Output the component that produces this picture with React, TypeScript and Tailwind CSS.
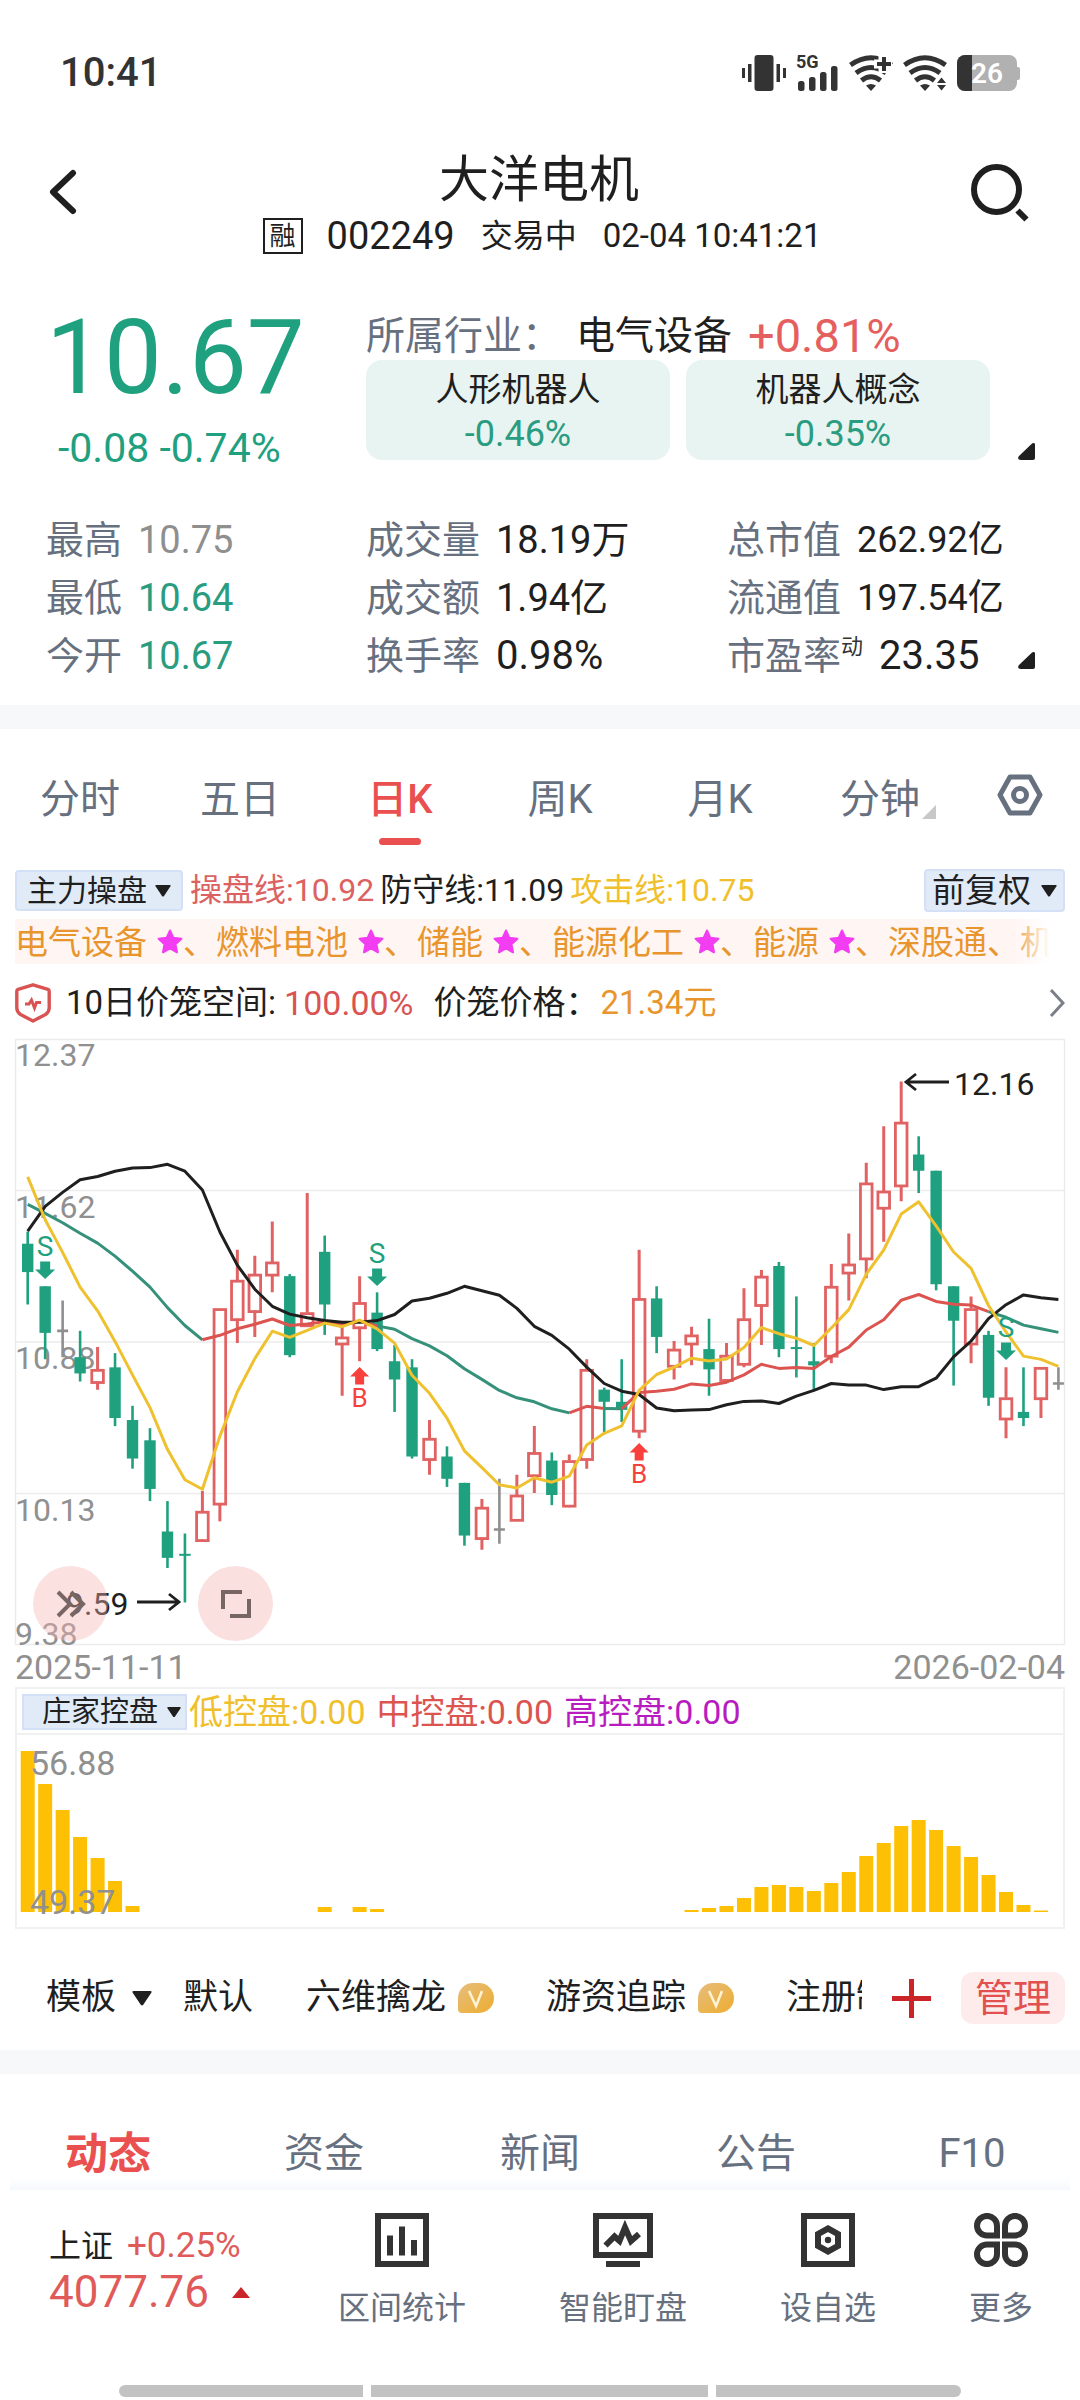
import type { ReactNode } from "react";

type Candle = [high: number, open: number, close: number, low: number];

const UP = "#e06262";
const DOWN = "#1fa07f";
const FLAT = "#8f8f8f";

const STEP = 17.47;
const FIRST_X = 12.7;
const TOP_PRICE = 12.37;
const BOTTOM_PRICE = 9.38;
const PLOT_HEIGHT = 606;

// [high, open, close, low]
const candles: Candle[] = [
  [11.42, 11.36, 11.22, 11.06],
  [11.15, 11.15, 10.92, 10.79],
  [11.08, 10.93, 10.93, 10.8],
  [10.93, 10.8, 10.72, 10.68],
  [10.85, 10.68, 10.74, 10.64],
  [10.82, 10.75, 10.5, 10.46],
  [10.56, 10.49, 10.3, 10.25],
  [10.45, 10.39, 10.15, 10.09],
  [10.09, 9.94, 9.81, 9.76],
  [9.93, 9.83, 9.82, 9.59],
  [10.14, 9.9, 10.04, 9.89],
  [11.04, 10.08, 11.04, 9.99],
  [11.33, 10.99, 11.18, 10.87],
  [11.3, 11.03, 11.21, 10.9],
  [11.47, 11.21, 11.27, 11.12],
  [11.21, 11.2, 10.81, 10.8],
  [11.61, 10.96, 11.02, 10.95],
  [11.4, 11.32, 11.06, 10.91],
  [10.96, 10.87, 10.9, 10.61],
  [11.2, 10.95, 11.07, 10.78],
  [11.12, 11.02, 10.84, 10.83],
  [10.86, 10.78, 10.69, 10.53],
  [10.79, 10.75, 10.31, 10.3],
  [10.49, 10.3, 10.4, 10.22],
  [10.36, 10.31, 10.2, 10.16],
  [10.18, 10.18, 9.92, 9.87],
  [10.1, 9.91, 10.06, 9.85],
  [10.2, 9.95, 9.95, 9.88],
  [10.22, 10.0, 10.12, 10.0],
  [10.46, 10.22, 10.33, 10.13],
  [10.33, 10.29, 10.12, 10.07],
  [10.32, 10.07, 10.29, 10.06],
  [10.79, 10.3, 10.74, 10.25],
  [10.65, 10.64, 10.58, 10.42],
  [10.79, 10.58, 10.54, 10.48],
  [11.33, 10.44, 11.09, 10.4],
  [11.15, 11.09, 10.9, 10.82],
  [10.88, 10.76, 10.84, 10.69],
  [10.95, 10.87, 10.91, 10.76],
  [10.99, 10.84, 10.74, 10.61],
  [10.87, 10.69, 10.81, 10.68],
  [11.14, 10.77, 10.99, 10.75],
  [11.23, 11.06, 11.2, 10.86],
  [11.27, 11.25, 10.84, 10.8],
  [11.1, 10.85, 10.84, 10.7],
  [10.87, 10.78, 10.76, 10.64],
  [11.26, 10.81, 11.15, 10.77],
  [11.41, 11.22, 11.26, 11.08],
  [11.76, 11.29, 11.66, 11.19],
  [11.94, 11.54, 11.62, 11.37],
  [12.16, 11.65, 11.96, 11.57],
  [11.89, 11.8, 11.72, 11.61],
  [11.72, 11.72, 11.16, 11.13],
  [11.15, 11.15, 10.98, 10.66],
  [11.1, 10.87, 11.04, 10.77],
  [10.93, 10.91, 10.6, 10.56],
  [10.75, 10.5, 10.6, 10.4],
  [10.75, 10.53, 10.5, 10.46],
  [10.75, 10.6, 10.75, 10.5],
  [10.75, 10.67, 10.67, 10.64],
];

// Indicator series, in raw plot units
const defence = [
  493, 432, 398, 367, 359, 346, 338, 337, 329, 346, 392, 495, 576, 635, 677, 696, 705, 712, 716, 716,
  712, 697, 664, 657, 645, 628, 639, 650, 682, 726, 748, 782, 826, 866, 885, 893, 926, 933, 931, 930,
  918, 910, 909, 915, 897, 883, 866, 870, 870, 881, 874, 874, 853, 801, 762, 707, 673, 649, 656, 660,
];
const attack = [
  360, 465, 545, 630, 688, 763, 845, 925, 1028, 1102, 1125, 995, 887, 805, 738, 753, 736, 718, 727, 711,
  732, 767, 846, 890, 951, 1031, 1072, 1114, 1122, 1097, 1108, 1093, 1017, 988, 970, 883, 844, 826, 804, 811,
  806, 778, 729, 744, 755, 773, 730, 685, 598, 539, 451, 421, 480, 544, 584, 675, 740, 799, 807, 824,
];
const control = [
  427, 449, 472, 498, 522, 554, 591, 630, 680, 724, 759, 748, 732, 721, 708, 724, 720, 715, 722, 714,
  725, 733, 756, 774, 798, 830, 856, 883, 901, 911, 928, 938, 922, 927, 928, 888, 885, 880, 867, 871,
  863, 845, 819, 829, 827, 829, 800, 777, 735, 710, 662, 648, 665, 672, 674, 690, 704, 723, 732, 741,
];
const controlSegments = [
  { from: 0, to: 10, color: "#35917a" },
  { from: 10, to: 20, color: "#dc5450" },
  { from: 20, to: 31, color: "#35917a" },
  { from: 31, to: 33, color: "#dc5450" },
  { from: 33, to: 34, color: "#35917a" },
  { from: 34, to: 55, color: "#dc5450" },
  { from: 55, to: 59, color: "#35917a" },
];

const sellMarks = [
  { index: 1, tip: 240 },
  { index: 20, tip: 247 },
  { index: 56, tip: 321 },
];
const buyMarks = [
  { index: 19, tip: 328 },
  { index: 35, tip: 404 },
];

const barHeights: Record<number, number> = {
  0: 161, 1: 128, 2: 102, 3: 75, 4: 54, 5: 31, 6: 6, 17: 5, 19: 5, 20: 3,
  38: 2, 39: 4, 40: 6, 41: 14, 42: 25, 43: 27, 44: 25, 45: 21, 46: 29, 47: 40, 48: 56,
  49: 69, 50: 86, 51: 92, 52: 82, 53: 66, 54: 55, 55: 37, 56: 20, 57: 7, 58: 1.5,
};

const xAt = (i: number) => FIRST_X + i * STEP;
const yAt = (price: number) =>
  ((TOP_PRICE - price) / (TOP_PRICE - BOTTOM_PRICE)) * PLOT_HEIGHT;
const linePoints = (values: number[], offset = 0) =>
  values.map((v, i) => `${xAt(i + offset).toFixed(1)},${(v / 2.45 - 9).toFixed(1)}`).join(" ");

function Caret({ className }: { className: string }) {
  return (
    <svg viewBox="0 0 16 12" className={className} aria-hidden="true">
      <path d="M1.5 0h13q2 0 .8 1.6L9 11q-1 1.2-2 0L.7 1.6Q-.5 0 1.5 0z" fill="#1f1f1f" />
    </svg>
  );
}

function CornerMark({ className }: { className: string }) {
  return (
    <svg viewBox="0 0 17 17" className={className} aria-hidden="true">
      <path d="M17 1v14a2 2 0 0 1-2 2H3C0 17-.6 15 1 13L13 1.500Q16-1 17 1z" fill="currentColor" />
    </svg>
  );
}

interface DropdownProps {
  label: string;
  value: string;
  className: string;
  caret: string;
}

function Dropdown({ label, value, className, caret }: DropdownProps) {
  return (
    <label className={`flex shrink-0 items-center ${className}`}>
      <select aria-label={label} className="appearance-none bg-transparent outline-none">
        <option>{value}</option>
      </select>
      <Caret className={caret} />
    </label>
  );
}

function WifiArcs() {
  return (
    <g fill="none" stroke="#333" strokeWidth="5">
      <path d="M1.500 10Q22-4.500 42.500 10" />
      <path d="M7 18Q22 7 37 18" />
      <path d="M12.500 25.500Q22 18 31.500 25.500" />
      <path d="M17 30.500Q22 27.500 27 30.500L22 36z" fill="#333" stroke="none" />
    </g>
  );
}

function StatusBar() {
  return (
    <div className="flex items-center justify-between py-[49px] pr-[60px] pl-[60px] leading-12">
      <span className="text-[40px] font-medium text-[#333]">10:41</span>
      <div className="flex items-center gap-[10px]">
        <svg width="44" height="36" viewBox="0 0 44 36" fill="#333" aria-label="振动">
          <rect x="12.500" width="19" height="36" rx="3" />
          <rect x="6" y="9" width="3.500" height="18" />
          <rect y="13" width="3" height="10" />
          <rect x="34.500" y="9" width="3.500" height="18" />
          <rect x="41" y="13" width="3" height="10" />
        </svg>
        <svg width="43" height="36" viewBox="0 0 43 36" fill="#333" className="overflow-visible" aria-label="5G">
          <text x="0" y="13" fontSize="18" fontWeight="700">5G</text>
          <rect x="2" y="26" width="6.500" height="10" rx="2.500" />
          <rect x="13" y="22" width="6.500" height="14" rx="2.500" />
          <rect x="24" y="17" width="6.500" height="19" rx="2.500" />
          <rect x="35" y="11" width="6.500" height="25" rx="2.500" />
        </svg>
        <svg width="44" height="36" viewBox="0 0 44 36" aria-label="WLAN+">
          <WifiArcs />
          <path d="M25 9h18M34 0v18" stroke="#fff" strokeWidth="9" />
          <path d="M28 9h14M35 2v14" stroke="#333" strokeWidth="4" />
        </svg>
        <svg width="44" height="36" viewBox="0 0 44 36" aria-label="WLAN">
          <WifiArcs />
          <path d="M38.500 20L45 28.500 38.500 37 32 28.500z" fill="#fff" />
          <path d="M38.500 22.500l4.500 5.500h-9zM34 30h9l-4.500 5.500z" fill="#333" />
        </svg>
        <svg width="63" height="36" viewBox="0 0 63 36" aria-label="电量 26">
          <rect width="60" height="36" rx="8" fill="#b1b1b1" />
          <rect x="58" y="12" width="5" height="13" rx="2" fill="#b1b1b1" />
          <path d="M8 0h7v36H8a8 8 0 0 1-8-8V8a8 8 0 0 1 8-8z" fill="#333" />
          <text x="14" y="28" fontSize="28" fontWeight="600" fill="#fff">26</text>
        </svg>
      </div>
    </div>
  );
}

function Header() {
  return (
    <header className="grid grid-cols-[1fr_auto_1fr] items-start pt-[6px] pr-[50px] pl-[48px]">
      <button aria-label="返回" className="mt-[17px] justify-self-start">
        <svg width="30" height="46" viewBox="0 0 30 46" fill="none" aria-hidden="true">
          <path d="M25 4L5 23l20 19" stroke="#1f1f1f" strokeWidth="6" strokeLinecap="round" strokeLinejoin="round" />
        </svg>
      </button>
      <div className="text-center text-[#1f1f1f]">
        <h1 className="text-[50px] leading-14">大洋电机</h1>
        <p className="mt-2 ml-[6px] flex items-center leading-10">
          <span className="border-2 border-[#1f1f1f] px-[5px] text-[26px] leading-8">融</span>
          <span className="ml-[24px] text-[38px]">002249</span>
          <span className="ml-[26px] text-[32px]">交易中</span>
          <span className="ml-[26px] text-[33px]">02-04 10:41:21</span>
        </p>
      </div>
      <button aria-label="搜索" className="mt-[11px] justify-self-end">
        <svg width="60" height="60" viewBox="0 0 60 60" fill="none" stroke="#1f1f1f" strokeWidth="6" aria-hidden="true">
          <circle cx="26.500" cy="26.500" r="22.500" />
          <path d="M47.500 47.500l9 9" />
        </svg>
      </button>
    </header>
  );
}

function Concept({ name, change }: { name: string; change: string }) {
  return (
    <a href="#concept" className="flex-1 rounded-2xl bg-[#e8f4f2] pt-2 pb-1 text-center">
      <span className="block text-[33px] leading-11 text-[#1f1f1f]">{name}</span>
      <span className="block text-4xl leading-11 text-[#2a9c80]">{change}</span>
    </a>
  );
}

interface StatProps {
  name: string;
  value: string;
  className: string;
  sup?: string;
  children?: ReactNode;
}

function Stat({ name, value, className, sup, children }: StatProps) {
  return (
    <div className="flex">
      <dt className="flex text-[38px] text-[#67707f]">
        {name}
        {sup && <span className="-mt-[9px] text-[22px] text-[#333]">{sup}</span>}
      </dt>
      <dd className={`ml-4 flex flex-1 ${className}`}>
        {value}
        {children}
      </dd>
    </div>
  );
}

function Quote() {
  return (
    <section className="pt-[50px] pr-[45px] pb-[20px] pl-[46px]">
      <div className="grid grid-cols-[320fr_669fr]">
        <div className="text-[#1fa07f]">
          <p className="text-[103px] leading-[104px]">10.67</p>
          <p className="mt-[18px] pl-3 text-[41px] leading-10">-0.08 -0.74%</p>
        </div>
        <div className="pt-[6px]">
          <p className="flex items-center text-[39px] leading-12">
            <span className="text-[#67707f]">所属行业：</span>
            <span className="ml-[15px] text-[#1f1f1f]">电气设备</span>
            <span className="ml-[16px] text-[47px] text-[#e65f5f]">+0.81%</span>
          </p>
          <div className="flex items-end gap-4">
            <Concept name="人形机器人" change="-0.46%" />
            <Concept name="机器人概念" change="-0.35%" />
            <CornerMark className="ml-[12px] w-[17px] text-[#1f1f1f]" />
          </div>
        </div>
      </div>
      <dl className="mt-[43px] grid grid-cols-[320fr_361fr_308fr] leading-[58px]">
        <Stat name="最高" value="10.75" className="text-[38px] text-[#8f8f8f]" />
        <Stat name="成交量" value="18.19万" className="text-[38px] text-[#1f1f1f]" />
        <Stat name="总市值" value="262.92亿" className="text-[36px] text-[#1f1f1f]" />
        <Stat name="最低" value="10.64" className="text-[38px] text-[#2a9c80]" />
        <Stat name="成交额" value="1.94亿" className="text-[38px] text-[#1f1f1f]" />
        <Stat name="流通值" value="197.54亿" className="text-[36px] text-[#1f1f1f]" />
        <Stat name="今开" value="10.67" className="text-[38px] text-[#2a9c80]" />
        <Stat name="换手率" value="0.98%" className="text-[40px] text-[#1f1f1f]" />
        <Stat name="市盈率" sup="动" value="23.35" className="items-center text-[40px] text-[#1f1f1f]">
          <CornerMark className="mt-2 ml-auto w-[17px]" />
        </Stat>
      </dl>
    </section>
  );
}

function PeriodTabs() {
  const periods = ["分时", "五日", "日K", "周K", "月K", "分钟"];
  return (
    <nav className="grid grid-cols-[repeat(6,4fr)_3fr] items-start pt-[43px] text-[40px] leading-14 text-[#67707f]">
      {periods.map((p) => (
        <button key={p} className={p === "日K" ? "font-medium text-[#e9504f]" : ""}>
          <span className="relative">
            {p}
            {p === "分钟" && (
              <svg viewBox="0 0 14 14" className="absolute right-[-16px] bottom-1 w-[14px]" aria-hidden="true">
                <path d="M14 0v14H0z" fill="#c8c8c8" />
              </svg>
            )}
          </span>
          <span
            className={
              p === "日K"
                ? "mx-auto mt-[10px] block h-[7px] w-[42px] rounded-full bg-[#e9504f]"
                : "mt-[10px] block h-[7px]"
            }
          />
        </button>
      ))}
      <button aria-label="图表设置" className="mt-[2px] justify-self-center">
        <svg width="46" height="42" viewBox="0 0 46 42" fill="none" stroke="#67707f" strokeWidth="5" aria-hidden="true">
          <path d="M13 3h20l10 18-10 18H13L3 21z" strokeLinejoin="round" />
          <circle cx="23" cy="21" r="6.500" />
        </svg>
      </button>
    </nav>
  );
}

function Star() {
  return (
    <svg viewBox="0 0 26 26" className="ml-[10px] inline-block w-[26px] align-[-1px]" aria-hidden="true">
      <path
        d="M13 1.500l3.400 7.300 8 1-5.900 5.500 1.500 8L13 19.400l-7 3.900 1.500-8L1.600 9.800l8-1z"
        fill="#f23df2"
        stroke="#f23df2"
        strokeWidth="2"
        strokeLinejoin="round"
      />
    </svg>
  );
}

function IndicatorBar() {
  const concepts = ["电气设备", "燃料电池", "储能", "能源化工", "能源"];
  return (
    <div className="mt-6 px-[15px] text-[33px] text-[#1f1f1f]">
      <div className="flex items-center leading-[37px]">
        <Dropdown
          label="主图指标"
          value="主力操盘"
          className="rounded border-2 border-[#d3e0f6] bg-[#e1ebf8] px-[10px] text-[30px]"
          caret="ml-2 w-[16px]"
        />
        <span className="ml-[7px] text-[32px] text-[#dc6262]">操盘线:10.92</span>
        <span className="ml-[6px] text-[32px]">防守线:11.09</span>
        <span className="ml-[6px] text-[32px] text-[#f0c02c]">攻击线:10.75</span>
        <Dropdown
          label="复权方式"
          value="前复权"
          className="ml-auto rounded border-2 border-[#d3e0f6] bg-[#e1ebf8] px-[6px] py-[1px]"
          caret="ml-[10px] w-[16px]"
        />
      </div>
      <div className="relative mt-[7px] mr-[15px] overflow-hidden bg-[#fff5f3] pt-[2px] leading-[43px] whitespace-nowrap text-[#e8952d]">
        {concepts.map((c) => (
          <span key={c}>
            <a href="#concept">{c}</a>
            <Star />、
          </span>
        ))}
        <a href="#concept">深股通</a>、<a href="#concept">机</a>
        <span className="absolute inset-y-0 right-0 w-10 bg-linear-to-r from-white/0 to-white" />
      </div>
      <div className="mt-[17px] flex items-center leading-11">
        <svg width="36" height="40" viewBox="0 0 36 40" fill="none" stroke="#d95353" aria-hidden="true">
          <path d="M18 1.800l15 4.500q1.200.5 1.200 2V25q0 4-3.700 6.500L18 38 5.500 31.500Q1.800 29 1.800 25V8.300q0-1.500 1.200-2z" strokeWidth="3.400" strokeLinejoin="round" />
          <path d="M10 21h4l2.500-4 3 8 2-5.500H26" strokeWidth="3" />
        </svg>
        <span className="ml-[15px]">10日价笼空间:</span>
        <span className="ml-2 text-[34px] text-[#d95353]">100.00%</span>
        <span className="ml-[20px]">价笼价格：</span>
        <span className="ml-[2px] text-[#e8952d]">21.34元</span>
        <button aria-label="价笼详情" className="ml-auto">
          <svg width="16" height="28" viewBox="0 0 16 28" fill="none" aria-hidden="true">
            <path d="M2 1l12 13L2 27" stroke="#7a7f88" strokeWidth="3" />
          </svg>
        </button>
      </div>
    </div>
  );
}

function CandleStick({ candle, index }: { candle: Candle; index: number }) {
  const [high, open, close, low] = candle;
  const x = xAt(index);
  const top = yAt(Math.max(open, close));
  const bottom = yAt(Math.min(open, close));
  if (open === close) {
    return (
      <path
        d={`M${x} ${yAt(high)}V${yAt(low)}M${x - 5.5} ${top}H${x + 5.5}`}
        stroke={FLAT}
        strokeWidth="2.600"
      />
    );
  }
  if (close > open) {
    return (
      <g stroke={UP} fill="none">
        <path d={`M${x} ${yAt(high)}V${top}M${x} ${bottom}V${yAt(low)}`} strokeWidth="3" />
        <rect x={x - 5.8} y={top + 1} width="11.600" height={Math.max(bottom - top, 4)} strokeWidth="2.800" />
      </g>
    );
  }
  return (
    <g fill={DOWN}>
      <path d={`M${x} ${yAt(high)}V${yAt(low)}`} stroke={DOWN} strokeWidth="2.600" />
      <rect x={x - 5.7} y={top} width="11.400" height={bottom - top} />
    </g>
  );
}

function PriceChart() {
  return (
    <div className="relative mx-[15px] mt-[14px]">
      <svg viewBox="0 0 1050 606" className="block w-full overflow-visible text-[32px]" role="img" aria-label="日K线图">
        <rect x="0.500" y="0.500" width="1049" height="605" fill="none" stroke="#ececec" strokeWidth="1.500" />
        <path d="M0 151.500H1050M0 303H1050M0 454.500H1050" stroke="#ececec" strokeWidth="1.500" />
        <g fill="#909090">
          <text x="0" y="27">12.37</text>
          <text x="0" y="179">11.62</text>
          <text x="0" y="330">10.88</text>
          <text x="0" y="482">10.13</text>
          <text x="0" y="606">9.38</text>
        </g>
        {candles.map((c, i) => (
          <CandleStick key={i} candle={c} index={i} />
        ))}
        <g fill="none" strokeWidth="3" strokeLinejoin="round">
          {controlSegments.map((s) => (
            <polyline
              key={s.from}
              points={linePoints(control.slice(s.from, s.to + 1), s.from)}
              stroke={s.color}
            />
          ))}
          <polyline points={linePoints(defence)} stroke="#1f1f1f" />
          <polyline points={linePoints(attack)} stroke="#efc12f" />
        </g>
        <g fill={DOWN} textAnchor="middle" fontSize="28">
          {sellMarks.map(({ index, tip }) => (
            <g key={index}>
              <path d={`M${xAt(index)} ${tip}l-10-9.500h5v-8h10v8h5z`} />
              <text x={xAt(index)} y={tip - 23}>S</text>
            </g>
          ))}
        </g>
        <g fill="#f8403d" textAnchor="middle" fontSize="26">
          {buyMarks.map(({ index, tip }) => (
            <g key={index}>
              <path d={`M${xAt(index)} ${tip}l-9.500 9.500h5v8h9v-8h5z`} />
              <text x={xAt(index)} y={tip + 40}>B</text>
            </g>
          ))}
        </g>
        <g fill="#1f1f1f" stroke="none">
          <text x="51" y="576">9.59</text>
          <text x="939" y="56">12.16</text>
          <path d="M122 563h42M154 555l10 8-10 8M934 43h-42M901 35l-10 8 10 8" fill="none" stroke="#1f1f1f" strokeWidth="2.800" />
        </g>
      </svg>
      <button aria-label="展开工具" className="absolute bottom-[4px] left-[18px] flex size-[75px] items-center justify-center rounded-full bg-[#f8b4b4]/40">
        <svg width="30" height="28" viewBox="0 0 30 28" fill="none" stroke="#776663" strokeWidth="4" aria-hidden="true">
          <path d="M2 2l12 12L2 26M15 2l12 12-12 12" />
        </svg>
      </button>
      <button aria-label="全屏" className="absolute bottom-[4px] left-[183px] flex size-[75px] items-center justify-center rounded-full bg-[#fbe0e0]">
        <svg width="30" height="30" viewBox="0 0 30 30" fill="none" stroke="#776663" strokeWidth="4" aria-hidden="true">
          <path d="M2 20V3h19M28 10v17H9" />
        </svg>
      </button>
    </div>
  );
}

function ControlPanel() {
  return (
    <div className="mx-[15px]">
      <div className="flex justify-between pt-[2px] text-[34px] leading-10 text-[#909090]">
        <time>2025-11-11</time>
        <time>2026-02-04</time>
      </div>
      <div className="border-2 border-[#f1f1f1] text-[34px]">
        <div className="flex items-center border-b-2 border-[#f1f1f1] pt-[5px] pb-[3px] leading-[36px]">
          <Dropdown
            label="副图指标"
            value="庄家控盘"
            className="ml-[5px] border-2 border-[#d3e0f6] bg-[#e1ebf8] pr-[4px] pl-[18px] text-[29px] leading-[32px] text-[#1f1f1f]"
            caret="ml-2 w-[14px]"
          />
          <span className="ml-[2px] text-[#f0c02c]">低控盘:0.00</span>
          <span className="ml-[11px] text-[#dc5450]">中控盘:0.00</span>
          <span className="ml-[11px] text-[#b81cc0]">高控盘:0.00</span>
        </div>
        <svg viewBox="0 0 1046 192" className="block w-full" role="img" aria-label="庄家控盘柱状图">
          {Object.entries(barHeights).map(([i, h]) => (
            <rect key={i} x={xAt(Number(i)) - 9} y={177 - h} width="14" height={h} fill="#fdc005" />
          ))}
          <g fill="#909090" fontSize="34">
            <text x="13" y="40">56.88</text>
            <text x="13" y="179">49.37</text>
          </g>
        </svg>
      </div>
    </div>
  );
}

function VipBadge() {
  return (
    <svg viewBox="0 0 36 30" className="ml-3 w-9 shrink-0" aria-label="VIP">
      <defs>
        <linearGradient id="vip" x1="0" y1="0" x2="1" y2="1">
          <stop offset="0" stopColor="#e6bd7c" />
          <stop offset="1" stopColor="#eead30" />
        </linearGradient>
      </defs>
      <path d="M15 0h6a15 15 0 0 1 0 30H4a4 4 0 0 1-4-4V15A15 15 0 0 1 15 0z" fill="url(#vip)" />
      <path d="M11 8l7 15 6-15" fill="none" stroke="#fff3d6" strokeWidth="2.500" />
    </svg>
  );
}

function TemplateBar() {
  return (
    <div className="flex items-center pt-[43px] pr-[15px] pb-[26px] pl-[46px] text-[35px] leading-[52px] text-[#1f1f1f]">
      <div className="flex min-w-0 flex-1 items-center overflow-hidden whitespace-nowrap">
        <Dropdown label="模板" value="模板" className="" caret="ml-[15px] w-[20px]" />
        <button className="ml-[31px] shrink-0">默认</button>
        <button className="ml-[53px] flex shrink-0 items-center">
          六维擒龙
          <VipBadge />
        </button>
        <button className="ml-[52px] flex shrink-0 items-center">
          游资追踪
          <VipBadge />
        </button>
        <button className="ml-[52px] shrink-0">注册制</button>
      </div>
      <button aria-label="添加模板" className="ml-[30px]">
        <svg width="39" height="39" viewBox="0 0 39 39" aria-hidden="true">
          <path d="M19.500 0v39M0 19.500h39" stroke="#cb2529" strokeWidth="5" />
        </svg>
      </button>
      <button className="ml-[30px] rounded-xl bg-[#feecec] px-[14px] text-[38px] text-[#e35050]">管理</button>
    </div>
  );
}

function InfoTabs() {
  const tabs = ["资金", "新闻", "公告", "F10"];
  return (
    <nav>
      <div className="grid grid-cols-5 pt-14 text-[40px] leading-12 text-[#67707f]">
        <button className="text-[43px] font-bold text-[#e9504f]">动态</button>
        {tabs.map((t) => (
          <button key={t}>{t}</button>
        ))}
      </div>
      <div className="mx-[10px] h-3 bg-linear-to-b from-white to-[#f5f8fd]" />
    </nav>
  );
}

function Tool({ name, children }: { name: string; children: ReactNode }) {
  return (
    <button className="flex flex-col items-center text-[32px] leading-10 text-[#67707f]">
      {children}
      <span className="mt-[21px]">{name}</span>
    </button>
  );
}

function BottomBar() {
  return (
    <footer>
      <div className="flex justify-between pt-[23px] pr-[47px] pl-[49px]">
        <a href="#index" className="w-[196px] pt-[13px] whitespace-nowrap text-[#e05a5a]">
          <span className="flex gap-[14px] text-[32px] leading-10">
            <span className="text-[#1f1f1f]">上证</span>
            <span className="text-[35px]">+0.25%</span>
          </span>
          <span className="mt-[2px] flex items-center text-[44px] leading-12">
            4077.76
            <svg viewBox="0 0 18 11" className="ml-[23px] w-[18px] shrink-0" aria-hidden="true">
              <path d="M9 0l9 11H0z" fill="#cb2529" />
            </svg>
          </span>
        </a>
        <Tool name="区间统计">
          <svg width="54" height="54" viewBox="0 0 54 54" aria-hidden="true">
            <rect x="3" y="3" width="48" height="48" fill="none" stroke="#333" strokeWidth="6" />
            <path d="M15 22.500V42.500M27 13.500V42.500M39 27V42.500" stroke="#333" strokeWidth="6" />
          </svg>
        </Tool>
        <Tool name="智能盯盘">
          <svg width="60" height="54" viewBox="0 0 60 54" aria-hidden="true">
            <rect x="3" y="3" width="54" height="39" fill="none" stroke="#333" strokeWidth="6" />
            <path d="M13 48h34v6H13z" fill="#333" />
            <path d="M12.500 32.500l9-9 5 4.500 5.500-13.500 6 13.500 8-7" fill="none" stroke="#333" strokeWidth="6" />
          </svg>
        </Tool>
        <Tool name="设自选">
          <svg width="54" height="54" viewBox="0 0 54 54" fill="none" stroke="#333" strokeWidth="6" aria-hidden="true">
            <rect x="3" y="3" width="48" height="48" />
            <path d="M27 15.500l10 5.500v12l-10 5.500L17 33V21z" />
            <circle cx="27" cy="27" r="3.200" fill="#333" stroke="none" />
          </svg>
        </Tool>
        <Tool name="更多">
          <svg width="54" height="54" viewBox="0 0 54 54" fill="none" stroke="#333" strokeWidth="6" aria-hidden="true">
            <path d="M23 22.500V12.800A10 9.800 0 1 0 13 22.500z" />
            <path d="M31 22.500V12.800A10 9.800 0 1 1 41 22.500z" />
            <path d="M23 31.500V41.200A10 9.800 0 1 1 13 31.500z" />
            <path d="M31 31.500V41.200A10 9.800 0 1 0 41 31.500z" />
          </svg>
        </Tool>
      </div>
      <div className="mt-[57px] grid grid-cols-[244fr_337fr_245fr] gap-2 px-[119px] pb-[3px]">
        <span className="h-3 rounded-l-full bg-[#c2c2c2]" />
        <span className="h-3 bg-[#c2c2c2]" />
        <span className="h-3 rounded-r-full bg-[#c2c2c2]" />
      </div>
    </footer>
  );
}

export default function App() {
  return (
    <main className="bg-white font-[Roboto,'Noto_Sans_CJK_SC',sans-serif]">
      <StatusBar />
      <Header />
      <Quote />
      <div className="h-6 bg-[#f7f8fa]" />
      <PeriodTabs />
      <IndicatorBar />
      <PriceChart />
      <ControlPanel />
      <TemplateBar />
      <div className="h-6 bg-[#f7f8fa]" />
      <InfoTabs />
      <BottomBar />
    </main>
  );
}
